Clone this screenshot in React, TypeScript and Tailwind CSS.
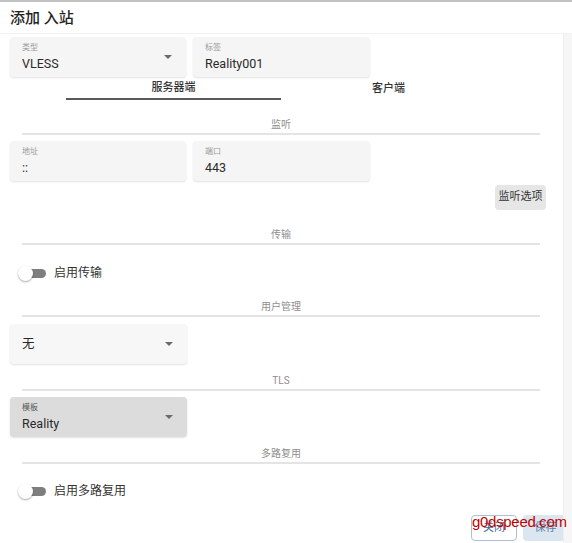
import React from 'react';

const font = { fontFamily: 'Roboto, "Noto Sans CJK SC", sans-serif' };

function Arrow() {
  return (
    <svg width="8" height="4" viewBox="0 0 8 4" className="shrink-0">
      <path d="M0 0h8L4 4z" fill="#6b6b6b" />
    </svg>
  );
}

function Field({ label, value, arrow, w = 'w-[176px]', bg = 'bg-[#f5f5f5]', labelColor = 'text-[#9a9a9a]' }: { label?: string; value: string; arrow?: boolean; w?: string; bg?: string; labelColor?: string }) {
  return (
    <div className={`${w} h-[40px] ${bg} rounded-[4px] shadow-[0_1px_2px_rgba(0,0,0,0.12)] flex items-center pl-[12px] pr-[14px]`}>
      <div className="flex-1 flex flex-col justify-center">
        {label && <div className={`text-[8px] leading-[10px] ${labelColor}`}>{label}</div>}
        <div className={`text-[12.5px] leading-[16px] text-[#2a2a2a] ${label ? 'mt-[3px]' : ''}`}>{value}</div>
      </div>
      {arrow && <Arrow />}
    </div>
  );
}

function Divider({ text, mt }: { text: string; mt: string }) {
  return (
    <div className={`${mt} mx-[12px] w-[518px]`}>
      <div className="text-center text-[10px] leading-[14px] text-[#8e8e8e]">{text}</div>
      <div className="mt-[1px] h-[2px] bg-[#e4e4e4]" />
    </div>
  );
}

function Toggle({ label, mt }: { label: string; mt: string }) {
  return (
    <div className={`${mt} h-[20px] flex items-center pl-[8px]`}>
      <div className="relative w-[28px] h-[14px] flex items-center">
        <div className="absolute left-[6px] w-[22px] h-[9px] rounded-full bg-[#7e7e7e]" />
        <div className="absolute left-0 w-[15px] h-[15px] rounded-full bg-white shadow-[0_1px_2px_rgba(0,0,0,0.35)]" />
      </div>
      <span className="ml-[8px] text-[12px] text-[#333]">{label}</span>
    </div>
  );
}

export default function App() {
  return (
    <div style={font} className="relative w-[572px] h-[543px] bg-white border-t-2 border-[#c2c2c2] overflow-hidden flex flex-col">
      <div className="h-[32px] shrink-0 flex items-center px-[10px] pt-[1px] border-b border-[#f2f2f2]">
        <span className="text-[15px] font-medium text-[#222]">添加 入站</span>
      </div>
      <div className="flex flex-1">
        <div className="flex-1 pl-[10px]">
          <div className="mt-[3px] flex gap-[7px]">
            <Field label="类型" value="VLESS" arrow />
            <Field label="标签" value="Reality001" w="w-[177px]" />
          </div>
          <div className="ml-[56px] w-[430px] flex h-[23px]">
            <div className="w-[215px] flex flex-col">
              <div className="flex-1 flex items-center justify-center pt-[2px] text-[11px] font-medium text-[#333]">服务器端</div>
              <div className="h-[2px] bg-[#5a5a5a]" />
            </div>
            <div className="w-[215px] flex items-center justify-center pt-[2px] text-[11px] font-medium text-[#333]">客户端</div>
          </div>
          <Divider text="监听" mt="mt-[18px]" />
          <div className="mt-[6px] flex gap-[7px]">
            <Field label="地址" value="::" />
            <Field label="端口" value="443" w="w-[177px]" />
          </div>
          <div className="mt-[4px] flex justify-end pr-[17px]">
            <button className="h-[25px] w-[51px] rounded-[4px] bg-[#e6e6e6] text-[11px] text-[#333]">监听选项</button>
          </div>
          <Divider text="传输" mt="mt-[18px]" />
          <Toggle label="启用传输" mt="mt-[18px]" />
          <Divider text="用户管理" mt="mt-[17px]" />
          <div className="mt-[7px]">
            <Field value="无" arrow w="w-[177px]" bg="bg-[#f7f7f7]" />
          </div>
          <Divider text="TLS" mt="mt-[10px]" />
          <div className="mt-[6px]">
            <Field label="模板" value="Reality" arrow w="w-[177px]" bg="bg-[#dcdcdc]" labelColor="text-[#555]" />
          </div>
          <Divider text="多路复用" mt="mt-[10px]" />
          <Toggle label="启用多路复用" mt="mt-[17px]" />
          <div className="mt-[14px] -mr-[5px] flex justify-end gap-[6px]">
            <button className="h-[26px] w-[46px] rounded-[4px] border-[1.5px] border-[#a9c0d6] text-[11px] text-[#3d6d9e]">关闭</button>
            <button className="h-[26px] w-[45px] rounded-[4px] bg-[#dbe6f0] text-[11px] text-[#5b7ea6]">保存</button>
          </div>
        </div>
        <div className="w-[9px] bg-[#f6f6f6] border-l border-[#efefef]" />
      </div>
      <div className="pointer-events-none absolute left-[472px] top-[510px] text-[15px] leading-[20px] tracking-[-0.3px] text-[#c00000]" style={{ fontFamily: '"Liberation Sans", sans-serif' }}>g0dspeed.com</div>
    </div>
  );
}
